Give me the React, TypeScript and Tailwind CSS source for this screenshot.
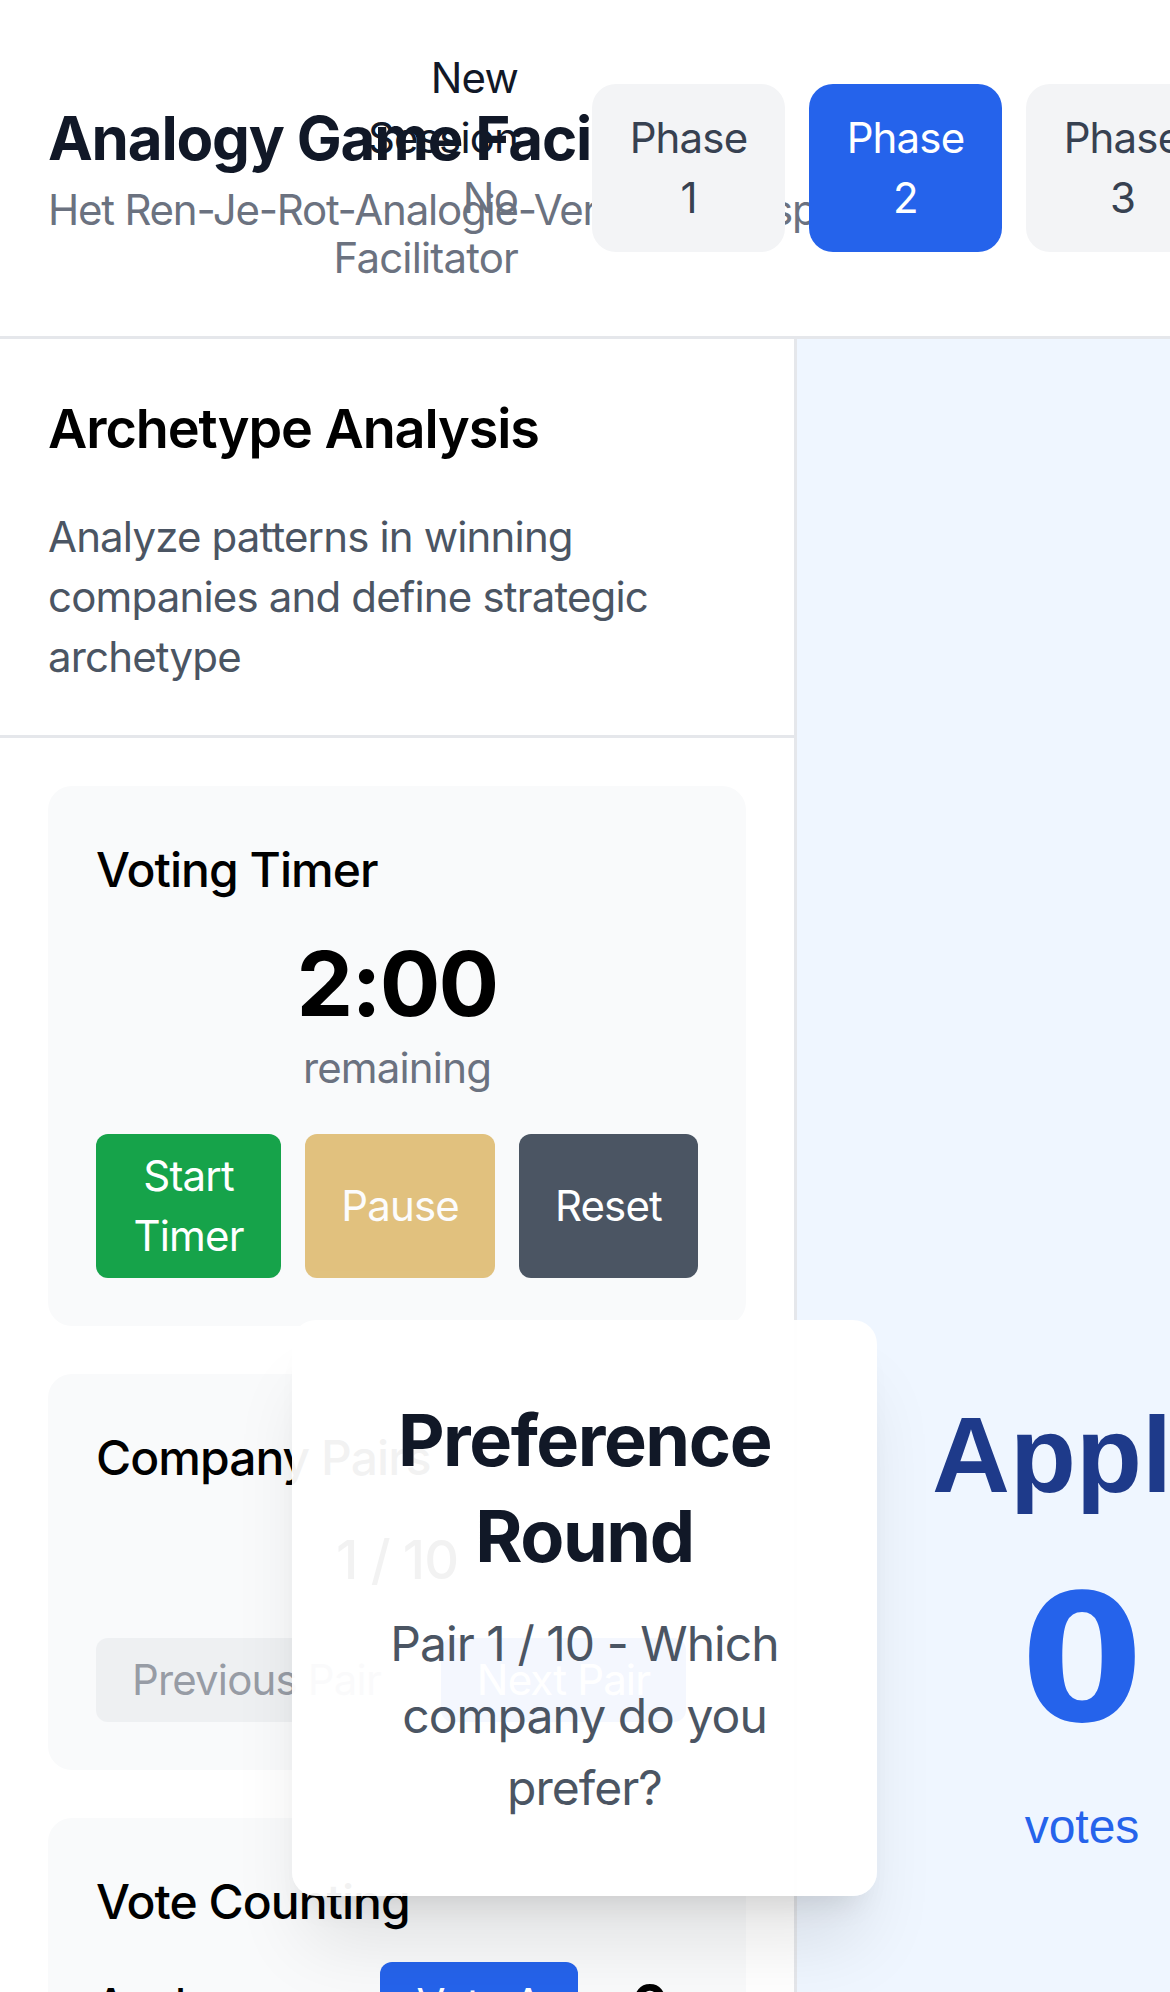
import React from 'react';

const phases = [1, 2, 3, 4];

export default function App() {
  const activePhase = 2;

  return (
    <div className="relative w-[1170px] h-[1992px] overflow-hidden bg-white text-black font-['Inter',sans-serif]">
      {/* Header */}
      <header className="flex items-center px-[48px] py-[48px] border-b-[3px] border-[#e5e7eb] bg-white">
        <div className="w-[280px] shrink-0 whitespace-nowrap">
          <h1 className="text-[60px] leading-[84px] font-bold tracking-[-0.02em] text-[#111827]">Analogy Game Facilitator</h1>
          <p className="text-[42px] leading-[60px] tracking-[-0.029em] text-[#6b7280]">Het Ren-Je-Rot-Analogie-Vergelijkingsspel</p>
        </div>
        <div className="w-[190px] shrink-0 text-right text-[42px] leading-[60px] tracking-[-0.02em]">
          <button className="block ml-auto w-[150px] text-right tracking-[-0.02em] text-[#111827]">New Session</button>
          <p className="tracking-[-0.02em] text-[#6b7280]">No Facilitator</p>
        </div>
        <div className="ml-[74px] flex shrink-0 gap-[24px]">
          {phases.map((n) => (
            <button
              key={n}
              className={
                n === activePhase
                  ? 'w-[193px] shrink-0 rounded-[24px] bg-[#2563eb] px-[36px] py-[24px] text-[42px] leading-[60px] tracking-[-0.02em] text-white'
                  : 'w-[193px] shrink-0 rounded-[24px] bg-[#f3f4f6] px-[36px] py-[24px] text-[42px] leading-[60px] tracking-[-0.02em] text-[#374151]'
              }
            >
              Phase {n}
            </button>
          ))}
        </div>
      </header>

      <div className="flex h-[1653px]">
        {/* Left panel */}
        <aside className="w-[797px] shrink-0 border-r-[3px] border-[#e5e7eb] bg-white">
          <div className="p-[48px] border-b-[3px] border-[#e5e7eb]">
            <h2 className="mb-[36px] text-[54px] leading-[84px] font-semibold tracking-[-0.02em]">Archetype Analysis</h2>
            <p className="text-[42px] leading-[60px] tracking-[-0.02em] text-[#4b5563]">
              Analyze patterns in winning companies and define strategic archetype
            </p>
          </div>

          <div className="flex flex-col gap-[48px] p-[48px]">
            {/* Timer */}
            <div className="rounded-[24px] bg-[#f9fafb] p-[48px]">
              <h3 className="mb-[24px] text-[48px] leading-[72px] font-medium tracking-[-0.02em]">Voting Timer</h3>
              <div className="mb-[36px] text-center">
                <div className="text-[90px] leading-[108px] font-bold tracking-[-0.02em]">2:00</div>
                <div className="text-[42px] leading-[60px] tracking-[-0.02em] text-[#6b7280]">remaining</div>
              </div>
              <div className="flex gap-[24px]">
                <button className="rounded-[12px] bg-[#16a34a] px-[36px] py-[12px] text-[42px] leading-[60px] tracking-[-0.02em] text-white">
                  Start Timer
                </button>
                <button className="rounded-[12px] bg-[#ca8a04] px-[36px] py-[12px] text-[42px] leading-[60px] tracking-[-0.02em] text-white opacity-50">
                  Pause
                </button>
                <button className="rounded-[12px] bg-[#4b5563] px-[36px] py-[12px] text-[42px] leading-[60px] tracking-[-0.02em] text-white">
                  Reset
                </button>
              </div>
            </div>

            {/* Pairs */}
            <div className="rounded-[24px] bg-[#f9fafb] p-[48px]">
              <h3 className="mb-[24px] text-[48px] leading-[72px] font-medium tracking-[-0.02em]">Company Pairs</h3>
              <div className="mb-[36px] text-center text-[54px] leading-[84px] font-medium tracking-[-0.02em]">1 / 10</div>
              <div className="flex gap-[24px]">
                <button className="whitespace-nowrap rounded-[12px] bg-[#e5e7eb] px-[36px] py-[12px] text-[42px] leading-[60px] tracking-[-0.02em] text-[#374151] opacity-50">
                  Previous Pair
                </button>
                <button className="whitespace-nowrap rounded-[12px] bg-[#2563eb] px-[36px] py-[12px] text-[42px] leading-[60px] tracking-[-0.02em] text-white">
                  Next Pair
                </button>
              </div>
            </div>

            {/* Votes */}
            <div className="rounded-[24px] bg-[#f9fafb] p-[48px]">
              <h3 className="mb-[24px] text-[48px] leading-[72px] font-medium tracking-[-0.02em]">Vote Counting</h3>
              <div className="flex flex-col gap-[24px]">
                <div className="flex items-center justify-between">
                  <span className="text-[42px] leading-[60px] font-medium tracking-[-0.02em]">Apple</span>
                  <div className="flex items-center gap-[24px]">
                    <button className="whitespace-nowrap rounded-[12px] bg-[#2563eb] px-[36px] py-[12px] text-[42px] leading-[60px] tracking-[-0.02em] text-white">
                      Vote A
                    </button>
                    <span className="w-[96px] text-center text-[54px] leading-[84px] font-bold">0</span>
                  </div>
                </div>
                <div className="flex items-center justify-between">
                  <span className="text-[42px] leading-[60px] font-medium tracking-[-0.02em]">Microsoft</span>
                  <div className="flex items-center gap-[24px]">
                    <button className="whitespace-nowrap rounded-[12px] bg-[#2563eb] px-[36px] py-[12px] text-[42px] leading-[60px] tracking-[-0.02em] text-white">
                      Vote B
                    </button>
                    <span className="w-[96px] text-center text-[54px] leading-[84px] font-bold">0</span>
                  </div>
                </div>
              </div>
            </div>
          </div>
        </aside>

        {/* Presentation panel */}
        <main className="flex flex-1 bg-[#eff6ff]">
          <div className="flex w-[570px] shrink-0 flex-col items-center pt-[1056px]">
            <div className="font-['Liberation_Sans',Arial,sans-serif] text-[108px] leading-[120px] font-bold text-[#1e3a8a]">
              Apple
            </div>
            <div className="mt-[56px] font-['DejaVu_Sans',sans-serif] text-[176px] leading-[180px] font-bold text-[#2563eb]">
              0
            </div>
            <div className="mt-[40px] font-['Liberation_Sans',Arial,sans-serif] text-[48px] leading-[72px] text-[#2563eb]">
              votes
            </div>
          </div>
        </main>
      </div>

      {/* Round dialog */}
      <div className="absolute left-[292px] top-[1320px] w-[585px] rounded-[24px] bg-white/95 p-[72px] text-center shadow-[0_60px_75px_-15px_rgba(0,0,0,0.1),0_24px_30px_-18px_rgba(0,0,0,0.1)]">
        <h2 className="mb-[24px] text-[72px] leading-[96px] font-bold tracking-[-0.02em] text-[#111827]">Preference Round</h2>
        <p className="text-[48px] leading-[72px] tracking-[-0.02em] text-[#4b5563]">Pair 1 / 10 - Which company do you prefer?</p>
      </div>
    </div>
  );
}
